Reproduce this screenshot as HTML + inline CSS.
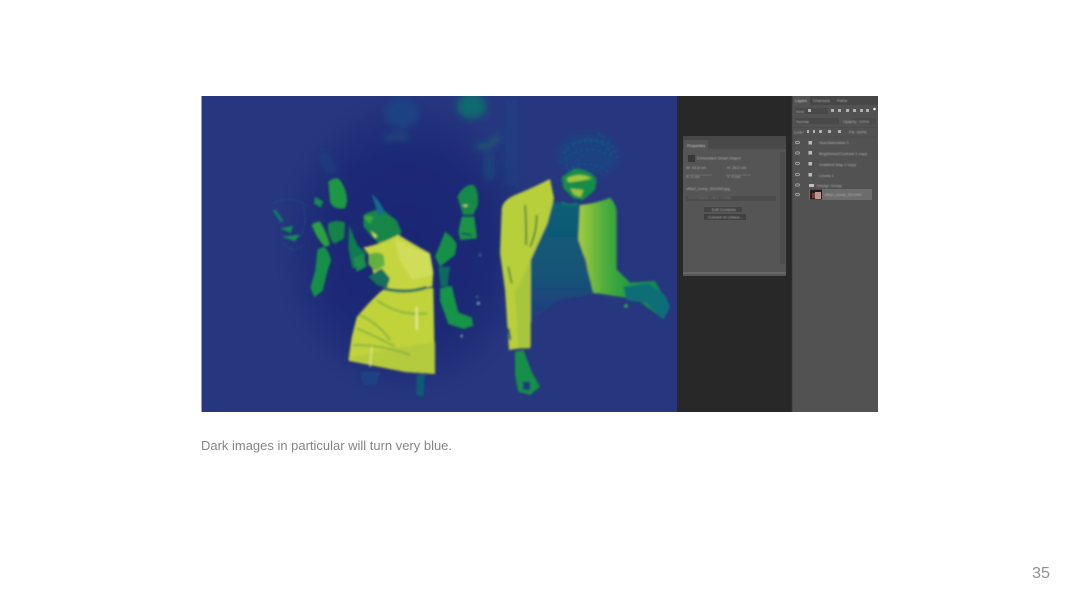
<!DOCTYPE html>
<html lang="en">
<head>
<meta charset="utf-8">
<title>Dark images</title>
<style>
html,body{margin:0;padding:0;background:#fff;width:1080px;height:608px;overflow:hidden}
svg{position:absolute;left:0;top:0}
.ui{font-family:"Liberation Sans",sans-serif;font-size:4px;fill:#b0b0b0}
</style>
</head>
<body>
<svg width="1080" height="608" viewBox="0 0 1080 608" xmlns="http://www.w3.org/2000/svg">
<defs>
<filter id="b1" x="-10%" y="-10%" width="120%" height="120%"><feGaussianBlur stdDeviation="3.2"/></filter>
<filter id="b2" x="-30%" y="-30%" width="160%" height="160%"><feGaussianBlur stdDeviation="12"/></filter>
<filter id="t"><feGaussianBlur stdDeviation="0.45"/></filter>
<filter id="c"><feGaussianBlur stdDeviation="0.35"/></filter>
<filter id="cap"><feGaussianBlur stdDeviation="0.3"/></filter>
<clipPath id="ph"><rect x="0" y="18" width="1427" height="946"/></clipPath>
<radialGradient id="dk" cx=".5" cy=".5" r=".5"><stop offset="0" stop-color="#1a2674"/><stop offset=".6" stop-color="#1c2976"/><stop offset="1" stop-color="#27377f"/></radialGradient>
<linearGradient id="jr" x1="0" x2="1" y1="0" y2="0"><stop offset="0" stop-color="#a6cc3c"/><stop offset=".3" stop-color="#4bad3c"/><stop offset=".6" stop-color="#1f9a40"/><stop offset="1" stop-color="#148058"/></linearGradient>
<linearGradient id="sh" x1="0" x2="0" y1="0" y2="1"><stop offset="0" stop-color="#0f5f76"/><stop offset=".6" stop-color="#155478"/><stop offset="1" stop-color="#243a7e"/></linearGradient>
</defs>

<rect x="201.500" y="96" width="476" height="316" fill="#27377f"/>
<g transform="translate(200 90) scale(.33333)" clip-path="url(#ph)">
  <ellipse cx="620" cy="470" rx="400" ry="470" fill="url(#dk)"/>
  <g filter="url(#b2)">
    <ellipse cx="605" cy="70" rx="50" ry="45" fill="#1b4384"/>
    <ellipse cx="815" cy="48" rx="44" ry="38" fill="#0f6a70"/>
    <path d="M550 150q40-18 80-6" stroke="#1a6a80" stroke-width="8" fill="none"/>
    <path d="M825 165q40 20 70-30" stroke="#187a70" stroke-width="9" fill="none"/>
    <path d="M868 190v80" stroke="#135078" stroke-width="18"/>
    <path d="M935 30v260" stroke="#1d4682" stroke-width="40" opacity=".45"/>
    <path d="M370 190l25 60" stroke="#1a4a84" stroke-width="14"/>
    <ellipse cx="1165" cy="195" rx="90" ry="65" fill="#1c4282"/>
  </g>

  <g filter="url(#b1)">
    <path d="M385 275q20-15 32-8 25 30 24 70l-6 18q-35 5-45-20z" fill="#1f9844"/>
    <path d="M345 320l25 15-8 18-20-12z" fill="#148a50"/>
    <path d="M385 398q30-10 50 0l-3 48-30 16q-22-25-17-64z" fill="#138248"/>
    <path d="M335 405q12-12 25-10 20 30 30 70l-15 6q-25-25-40-66z" fill="#2ba040"/>
    <path d="M352 480q12-10 23-8 14 15 18 40l-10 30-15 60-25 20-12-30 15-50z" fill="#17904a"/>
    <path d="M240 415l40-8-8 22zM245 440l55-6-15 20z" fill="#128c58"/>
    <path d="M222 360l25 35" stroke="#10806a" stroke-width="9"/>
    <path d="M447 405l25 60 25 25-5 40-35 5-12-60z" fill="#117c50"/>
    <g fill="none" stroke="#2a6e8a" stroke-width="4" stroke-dasharray="4 7" opacity=".8">
      <path d="M220 340q50-30 105 10"/><path d="M250 460q30 35 60 5"/><path d="M310 350q15 50-10 90"/>
    </g>

    <path d="M490 375q40-22 60-14l40 30 15 35-25 30-40 8-25-25-25-30z" fill="#128648"/>
    <path d="M515 310q25 25 40 55l-20 12z" fill="#166c8a"/>
    <path d="M512 422l20 16-8 7z" fill="#d9e070"/>
    <path d="M490 382q15-10 30 0l-10 20z" fill="#3aa83e"/>

    <path d="M490 472q50-8 105-38 40 25 95 56l10 55-3 45-80 12-65-8-30-35-12-60z" fill="#c5d540"/>
    <path d="M585 445l60 30 45 20 8 60-60 15-40-60z" fill="#d0dd58"/>
    <path d="M548 600l152-6 5 258-90-6-170-34 10-70q10-40 15-60 40-50 78-82z" fill="#c0d33a"/>
    <path d="M445 805q130-30 260-50v97l-90-6z" fill="#b4cb3c"/>
    <path d="M552 596q70 16 128-4" stroke="#176c5a" stroke-width="9" fill="none"/>
    <g fill="none" stroke="#7eae3e" stroke-width="6" opacity=".8">
      <path d="M480 675q60 30 90 75"/><path d="M470 715q60 25 115 55"/><path d="M530 630q70 50 150 40"/><path d="M460 765q90 0 170 30"/>
    </g>
    <path d="M650 650v70" stroke="#e7eb9c" stroke-width="6"/>
    <path d="M515 770l-5 60" stroke="#e0e690" stroke-width="4"/>
    <path d="M505 495q25-15 45 0l5 30-30 18-20-20z" fill="#64b040"/>
    <path d="M505 560l40-25 25 30-10 30-30-10z" fill="#136f5c"/>
    <path d="M490 490l10 40-30 15-10-40z" fill="#1b8d4c"/>
    <path d="M650 855h25l-5 65-22-5z" fill="#0f5c76"/>
    <path d="M480 845h60l-10 40h-40z" fill="#1a4884" opacity=".7"/>

    <path d="M735 425q30 20 35 40l-5 30-45 35-15-30z" fill="#159048"/>
    <path d="M715 530h35l-8 60h-20z" fill="#0d6a5e"/>
    <path d="M720 595l35-8 20 80 40 15 5 25-30 10-45-15-25-70z" fill="#179446"/>
    <path d="M772 320q20-40 50-35 15 20 12 60l-15 30h-30z" fill="#148a4a"/>
    <path d="M785 345h20l-8 6z" fill="#d8e28a"/>
    <path d="M785 380h38l8 65-50 5-6-25z" fill="#1a9444"/>
    <path d="M785 430l30 5" stroke="#0b4a66" stroke-width="5"/>

    <path d="M1050 335l90 10 10 170 45 95-120 20-85 70-1-200 30-100z" fill="url(#sh)"/>
    <path d="M1140 345q50-5 90-22 20 20 20 45v170l40 40 75-5 40 70-20 40-75-55-130-20-25-100-20-60z" fill="url(#jr)"/>
    <path d="M1270 590l75-10 50 35 15 35-20 40-50-50-60-10z" fill="#0f6e78"/>
    <path d="M905 355q5-25 40-40 50-20 105-48l12 58-20 75-50 110v260l-65 10-12-180-15-110z" fill="#b7cf3a"/>
    <path d="M990 515v260h-35l-10-170z" fill="#a8c63c"/>
    <path d="M1010 375q0 55-20 95M975 345q5 60 3 120M925 530l10 50" stroke="#507c3e" stroke-width="5" fill="none"/>
    <path d="M925 715l6 35" stroke="#0d4e58" stroke-width="6"/>
    <path d="M1085 260l40-25q50 5 65 35l-5 30-35 30-30-5-30-30z" fill="#178c48"/>
    <path d="M1100 265q40-20 75 0-30 8-70 12z" fill="#a0c83e"/>
    <path d="M1110 295l40 5-8 22-20-8z" fill="#9bc43e"/>
    <path d="M1085 335q15 15 50 5" stroke="#0f7a62" stroke-width="6" fill="none"/>
    <path d="M945 785l25-5 25 65 25 45-30 25-35-10-10-50z" fill="#16904a"/>
    <path d="M968 875h22v25h-20z" fill="#1d3a7c"/>
    <g fill="none" stroke="#1c5a8a" stroke-width="6" stroke-dasharray="7 11" opacity=".8">
      <path d="M1090 190q60-70 150-20"/><path d="M1080 220q70-70 160-20"/><path d="M1120 160q70-30 115 30"/><path d="M1100 240q70-40 130 10"/><path d="M1195 130q50 30 60 80"/>
    </g>
    <g fill="#6fa8a0"><circle cx="835" cy="640" r="5"/><circle cx="832" cy="620" r="3"/><circle cx="840" cy="495" r="3"/><circle cx="785" cy="738" r="4"/><circle cx="1278" cy="648" r="6" fill="#2aa048"/></g>
  </g>
</g>

<rect x="677" y="96" width="115" height="316" fill="#282828"/>
<rect x="792" y="96" width="86" height="316" fill="#525252"/>

<g filter="url(#c)">
  <rect x="683" y="136" width="103" height="140" fill="#555"/>
  <rect x="683" y="136" width="103" height="4" fill="#474747"/>
  <rect x="683" y="140" width="103" height="9" fill="#4a4a4a"/>
  <rect x="684" y="140" width="24" height="9" fill="#555"/>
  <rect x="780" y="152" width="5" height="112" fill="#4d4d4d"/>
  <rect x="683" y="272" width="103" height="2" fill="#666"/>
  <rect x="688" y="155" width="7" height="7" fill="#383838"/>
  <rect x="686" y="196" width="90" height="5" fill="#4c4c4c"/>
  <rect x="704" y="207" width="38" height="5" fill="#444"/>
  <rect x="704" y="214" width="42" height="6" fill="#404040"/>
  <path d="M686 175h26M726 175h25" stroke="#808080" stroke-width=".6"/>
  <g filter="url(#t)">
    <text class="ui" x="687" y="147" style="fill:#ccc">Properties</text>
    <text class="ui" x="697" y="159.500">Embedded Smart Object</text>
    <text class="ui" x="686" y="169">W: 43.8 cm</text>
    <text class="ui" x="727" y="169">H: 29.2 cm</text>
    <text class="ui" x="686" y="178">X: 0 cm</text>
    <text class="ui" x="727" y="178">Y: 0 cm</text>
    <text class="ui" x="686" y="190">offset_comp_521040.jpg</text>
    <text class="ui" x="688" y="198.500" style="fill:#777">Don't Apply Layer Comp</text>
    <text class="ui" x="712" y="211">Edit Contents</text>
    <text class="ui" x="708" y="218.500">Convert to Linked...</text>
  </g>
</g>

<g filter="url(#c)">
  <rect x="792" y="96" width="86" height="9" fill="#474747"/>
  <rect x="793" y="96" width="17" height="9" fill="#535353"/>
  <path d="M792 96v316" stroke="#3a3a3a" stroke-width=".8"/>
  <rect x="795" y="108" width="33" height="6" fill="#484848"/>
  <rect x="795" y="118" width="44" height="6" fill="#484848"/>
  <rect x="852" y="118" width="24" height="6" fill="#4c4c4c"/>
  <path d="M793 127.500h84M793 137h84" stroke="#494949" stroke-width=".6"/>
  <rect x="809" y="189" width="63" height="11" fill="#6c6c6c"/>
  <rect x="810" y="189.500" width="12" height="10" fill="#2c1c18"/>
  <rect x="815" y="192" width="6" height="7" fill="#b89890"/>
  <rect x="812" y="193" width="3" height="5" fill="#7a3b32"/>
  <g fill="#bdbdbd">
    <rect x="808.500" y="141" width="3.500" height="3.500"/><rect x="808.500" y="151" width="3.500" height="3.500"/><rect x="808.500" y="162" width="3.500" height="3.500"/><rect x="808.500" y="173" width="3.500" height="3.500"/>
    <rect x="809" y="184" width="5" height="3"/>
  </g>
  <g fill="#b0b0b0">
    <rect x="808" y="109" width="3" height="3"/><rect x="831" y="109" width="3" height="3"/><rect x="838" y="109" width="3" height="3"/><rect x="846" y="109" width="3" height="3"/><rect x="853" y="109" width="3" height="3"/><rect x="860" y="109" width="3" height="3"/><rect x="866" y="109" width="3" height="3"/><circle cx="874.500" cy="109" r="1.300" fill="#eee"/>
    <rect x="807" y="130" width="2" height="3"/><rect x="813" y="130" width="2" height="3"/><rect x="819" y="130" width="3" height="3"/><rect x="828" y="130" width="3" height="3"/><rect x="838" y="130" width="3" height="3"/>
  </g>
  <g fill="none" stroke="#aaa" stroke-width=".8">
    <ellipse cx="797.500" cy="142.500" rx="2" ry="1.200"/><ellipse cx="797.500" cy="153" rx="2" ry="1.200"/><ellipse cx="797.500" cy="163.500" rx="2" ry="1.200"/><ellipse cx="797.500" cy="174.500" rx="2" ry="1.200"/><ellipse cx="797.500" cy="185" rx="2" ry="1.200"/><ellipse cx="797.500" cy="194.500" rx="2" ry="1.200"/>
  </g>
  <g filter="url(#t)">
    <text class="ui" x="795" y="102" style="fill:#ccc">Layers</text>
    <text class="ui" x="813" y="102">Channels</text>
    <text class="ui" x="837" y="102">Paths</text>
    <text class="ui" x="796" y="113">Kind</text>
    <text class="ui" x="796" y="123">Normal</text>
    <text class="ui" x="843" y="123">Opacity: 100%</text>
    <text class="ui" x="794" y="133.500">Lock:</text>
    <text class="ui" x="849" y="133.500">Fill: 100%</text>
    <text class="ui" x="819" y="144">Hue/Saturation 1</text>
    <text class="ui" x="819" y="155">Brightness/Contrast 1 copy</text>
    <text class="ui" x="819" y="166">Gradient Map 1 copy</text>
    <text class="ui" x="819" y="177">Levels 1</text>
    <text class="ui" x="817" y="187">Design Group</text>
    <text class="ui" x="824" y="196">offset_comp_521040</text>
  </g>
</g>

<text x="201" y="450" filter="url(#cap)" font-family="'Liberation Sans',sans-serif" font-size="13" fill="#858585" textLength="251" lengthAdjust="spacingAndGlyphs">Dark images in particular will turn very blue.</text>
<text x="1032" y="578" filter="url(#cap)" font-family="'Liberation Sans',sans-serif" font-size="16" fill="#909090" textLength="18" lengthAdjust="spacingAndGlyphs">35</text>
</svg>
</body>
</html>
